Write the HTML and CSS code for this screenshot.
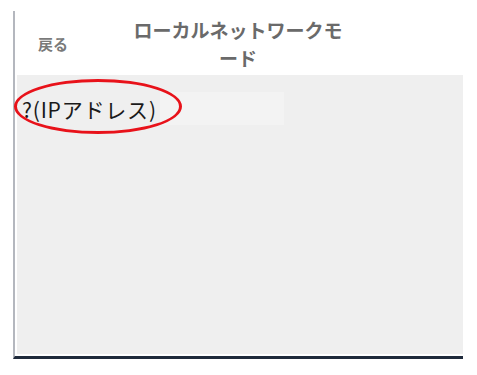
FILE: index.html
```html
<!DOCTYPE html>
<html lang="ja">
<head>
<meta charset="utf-8">
<link rel="stylesheet" href="styles.css">
</head>
<body>
<div class="frame">
  <div class="header">
    <div class="back">戻る</div>
    <div class="title">ローカルネットワークモード</div>
  </div>
  <div class="content">
    <div class="field">
      <div class="label">?(IPアドレス)</div>
      <div class="input"></div>
    </div>
    <div class="mark"></div>
  </div>
</div>
</body>
</html>
```
FILE: styles.css
```css
html, body {
  margin: 0;
  padding: 0;
  background: #ffffff;
}
body {
  font-family: "Noto Sans CJK JP", "Noto Sans", sans-serif;
}
.frame {
  margin: 11px 0 0 13px;
  width: 448px;
  height: 345px;
  border-left: 2px solid #b4b7be;
  border-bottom: 3px solid #1f2a3b;
  display: flex;
  flex-direction: column;
}
.header {
  height: 64px;
  display: flex;
  align-items: center;
}
.back {
  width: 113px;
  padding-left: 23px;
  box-sizing: border-box;
  font-size: 15px;
  font-weight: bold;
  color: #7a7a7a;
  padding-top: 1px;
}
.title {
  width: 220px;
  text-align: center;
  font-size: 19px;
  line-height: 28px;
  font-weight: bold;
  color: #6a6a6a;
  padding-top: 1px;
}
.content {
  position: relative;
  flex: 1;
  margin: 0 0 2px 2px;
  background: #efefef;
}
.field {
  margin-top: 17px;
  height: 33px;
  display: flex;
  align-items: center;
}
.label {
  padding-left: 5px;
  font-size: 21px;
  letter-spacing: 0.8px;
  color: #1a1a1a;
  white-space: nowrap;
  padding-top: 1px;
}
.input {
  width: 124px;
  height: 33px;
  margin-left: 3px;
  background: #f3f3f3;
}
.mark {
  position: absolute;
  left: -3px;
  top: 4px;
  width: 168px;
  height: 55px;
  box-sizing: border-box;
  border: 3.5px solid #e8121a;
  border-radius: 50%;
}
```
